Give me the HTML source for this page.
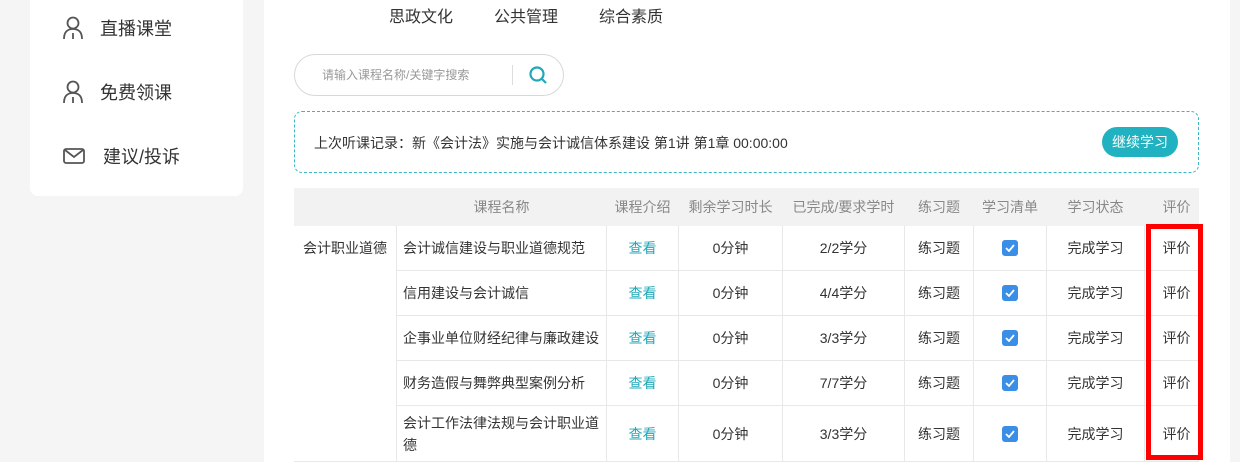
<!DOCTYPE html>
<html><head><meta charset="utf-8"><style>
*{margin:0;padding:0;box-sizing:border-box}
html,body{width:1240px;height:462px;overflow:hidden}
body{background:#f5f5f5;font-family:"Liberation Sans","Noto Sans CJK SC",sans-serif;position:relative;color:#333}
.a{position:absolute}
.side{left:30px;top:-10px;width:213px;height:206px;background:#fff;border-radius:8px}
.mi{font-size:18px;color:#333;display:flex;align-items:center}
.main{left:264px;top:0;width:966px;height:462px;background:#fff}
.tab{font-size:16px;color:#333;top:3px}
.c{position:absolute;display:flex;align-items:center;justify-content:center;font-size:14px;color:#333;border-right:1px solid #e8e8e8;border-bottom:1px solid #e8e8e8;text-align:center}
.h{background:#f2f2f2;color:#888;border-color:#f2f2f2}
.chk{width:16px;height:16px;background:#3a8ee6;border-radius:3px;display:flex;align-items:center;justify-content:center}
.t{color:#20a8b8}
</style></head><body>
<div class="a side"></div>
<div class="a mi" style="left:62px;top:15px"><svg width="22" height="24" viewBox="0 0 22 24"><circle cx="11" cy="7" r="5.5" fill="none" stroke="#555" stroke-width="1.8"/><path d="M2 23 Q2 13 11 13 Q20 13 20 23 M11 17 V23" fill="none" stroke="#555" stroke-width="1.8"/></svg><span style="margin-left:16px">直播课堂</span></div>
<div class="a mi" style="left:62px;top:79px"><svg width="22" height="24" viewBox="0 0 22 24"><circle cx="11" cy="7" r="5.5" fill="none" stroke="#555" stroke-width="1.8"/><path d="M2 23 Q2 13 11 13 Q20 13 20 23 M11 17 V23" fill="none" stroke="#555" stroke-width="1.8"/></svg><span style="margin-left:16px">免费领课</span></div>
<div class="a mi" style="left:63px;top:143px"><svg width="22" height="20" viewBox="0 0 22 20"><rect x="1" y="3" width="20" height="14" rx="2" fill="none" stroke="#555" stroke-width="1.8"/><path d="M2 4 L11 11 L20 4" fill="none" stroke="#555" stroke-width="1.8"/></svg><span style="margin-left:18px">建议/投诉</span></div>
<div class="a main"></div>
<div class="a tab" style="left:389px">思政文化</div>
<div class="a tab" style="left:494px">公共管理</div>
<div class="a tab" style="left:599px">综合素质</div>
<div class="a" style="left:294px;top:54px;width:270px;height:42px;border:1px solid #d8d8d8;border-radius:21px"></div>
<div class="a" style="left:322px;top:66px;font-size:12px;color:#999">请输入课程名称/关键字搜索</div>
<div class="a" style="left:512px;top:65px;width:1px;height:20px;background:#ddd"></div>
<svg class="a" style="left:528px;top:65px" width="20" height="20" viewBox="0 0 20 20"><circle cx="9" cy="9" r="6.5" fill="none" stroke="#20a8b8" stroke-width="2.2"/><path d="M14 14 L18 18" stroke="#20a8b8" stroke-width="2.2"/></svg>
<div class="a" style="left:294px;top:111px;width:905px;height:62px;border:1px dashed #3bb5c3;border-radius:8px"></div>
<div class="a" style="left:314px;top:133px;font-size:14px;color:#333">上次听课记录：新《会计法》实施与会计诚信体系建设 第1讲 第1章 00:00:00</div>
<div class="a" style="left:1102px;top:127px;width:76px;height:30px;background:#20b2c0;border-radius:15px;color:#fff;font-size:14px;display:flex;align-items:center;justify-content:center">继续学习</div>

<div class="c h" style="left:294px;top:188px;width:103px;height:38px"></div>
<div class="c h" style="left:397px;top:188px;width:210px;height:38px">课程名称</div>
<div class="c h" style="left:607px;top:188px;width:72px;height:38px">课程介绍</div>
<div class="c h" style="left:679px;top:188px;width:104px;height:38px">剩余学习时长</div>
<div class="c h" style="left:783px;top:188px;width:122px;height:38px">已完成/要求学时</div>
<div class="c h" style="left:905px;top:188px;width:69px;height:38px">练习题</div>
<div class="c h" style="left:974px;top:188px;width:73px;height:38px">学习清单</div>
<div class="c h" style="left:1047px;top:188px;width:98px;height:38px">学习状态</div>
<div class="c h" style="left:1145px;top:188px;width:54px;height:38px;padding-left:10px">评价</div>
<div class="c" style="left:294px;top:226px;width:103px;height:236px;align-items:flex-start;padding-top:12px">会计职业道德</div>
<div id="rows"></div>
<script>
var d=[["会计诚信建设与职业道德规范","2/2",226,45],["信用建设与会计诚信","4/4",271,45],["企事业单位财经纪律与廉政建设","3/3",316,45],["财务造假与舞弊典型案例分析","7/7",361,45],["会计工作法律法规与会计职业道德","3/3",406,56]];
var cols=[[397,210],[607,72],[679,104],[783,122],[905,69],[974,73],[1047,98],[1145,54]];
var h="";
d.forEach(function(r){var v=['<span style="display:block;text-align:left;width:100%;padding:0 6px;line-height:22px">'+r[0]+'</span>','<span class="t">查看</span>','0分钟',r[1]+'学分','练习题','<div class="chk"><svg width="10" height="8" viewBox="0 0 10 8"><path d="M1 4 L4 7 L9 1" fill="none" stroke="#fff" stroke-width="1.8"/></svg></div>','完成学习','<span style="padding-left:10px">评价</span>'];
cols.forEach(function(c,i){h+='<div class="c" style="left:'+c[0]+'px;top:'+r[2]+'px;width:'+c[1]+'px;height:'+r[3]+'px">'+v[i]+'</div>';});});
document.getElementById('rows').innerHTML=h;
</script>
<div class="a" style="left:1146px;top:224px;width:57px;height:236px;border:5px solid #f00"></div>
</body></html>
